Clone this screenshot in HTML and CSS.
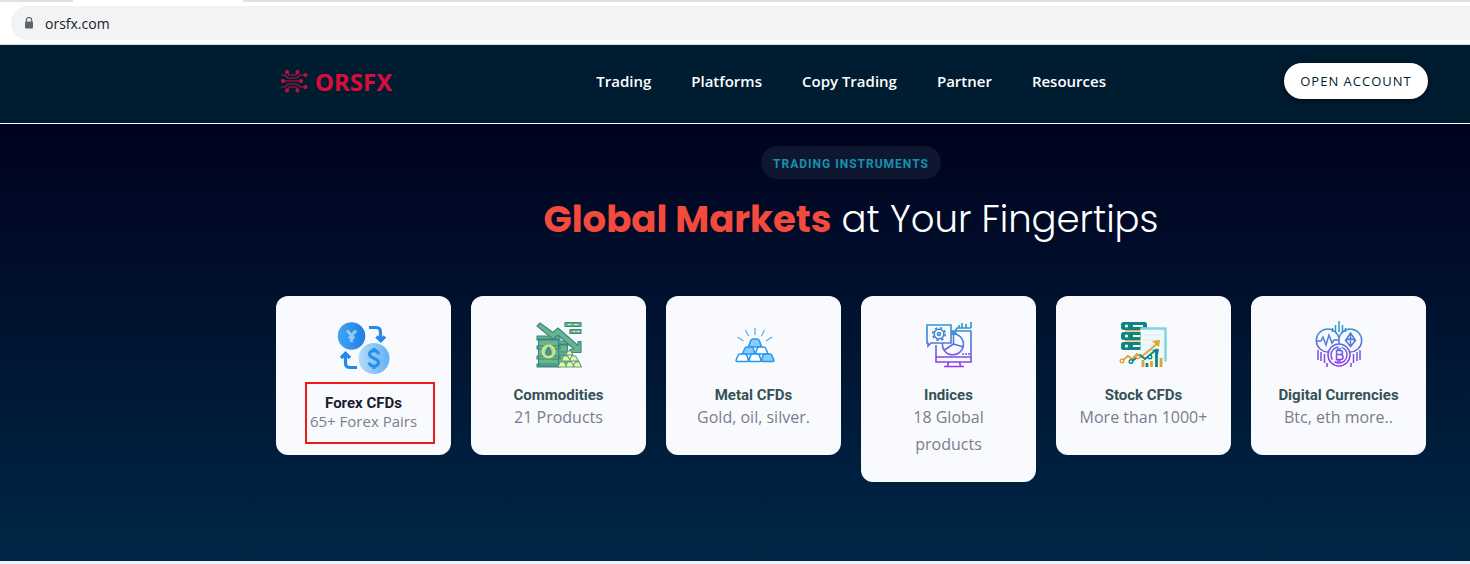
FILE: index.html
```html
<!DOCTYPE html>
<html lang="en">
<head>
  <meta charset="UTF-8" />
  <meta name="viewport" content="width=device-width, initial-scale=1" />
  <title>ORSFX</title>
  <link rel="stylesheet" href="styles.css">
</head>
<body>
  <!-- Browser bar -->
  <div class="tab-strip"><span class="tab-active"></span></div>
  <div class="address-bar">
    <div class="address">
      <svg class="lock" viewBox="0 0 10 12"><path d="M2.3 5V3.2a2.7 2.7 0 0 1 5.4 0V5" fill="none" stroke="#5f6368" stroke-width="1.2"/><rect x="1" y="4.5" width="8" height="7" rx="1" fill="#5f6368"/></svg>
      <input type="text" value="orsfx.com" aria-label="Address" />
    </div>
  </div>

  <!-- Header -->
  <header class="site-header">
    <a href="#" class="logo">
      <svg viewBox="0 0 28 24" fill="none" stroke="#c5103f" stroke-width="1.2">
        <path d="M1 6h4l3 3h9l3-3h4M7 3l2 3h7l2-3M4 12h18M1 18h4l3-3h9l3 3h4M7 21l2-3h7l2 3"/>
        <g fill="#a01a40"><circle cx="7" cy="3" r="1.5"/><circle cx="17.500" cy="3" r="1.5"/><circle cx="25.500" cy="6" r="1.5"/><circle cx="3" cy="12" r="1.5"/><circle cx="21" cy="12" r="1.5"/><circle cx="25.500" cy="18" r="1.5"/><circle cx="7" cy="21.500" r="1.5"/><circle cx="17.500" cy="21.500" r="1.5"/></g>
      </svg>
      <span>ORSFX</span>
    </a>
    <nav class="main-nav">
      <a href="#">Trading</a>
      <a href="#">Platforms</a>
      <a href="#">Copy Trading</a>
      <a href="#">Partner</a>
      <a href="#">Resources</a>
    </nav>
    <button class="open-btn">OPEN ACCOUNT</button>
  </header>

  <!-- Trading instruments -->
  <section class="markets">
    <span class="badge">TRADING INSTRUMENTS</span>
    <h1><strong>Global Markets</strong> at Your Fingertips</h1>

    <div class="cards">
      <div class="card forex">
        <svg class="icon" viewBox="0 0 56 56">
          <defs>
            <linearGradient id="coin-a"><stop stop-color="#42a5f5"/><stop offset="1" stop-color="#1e7fe0"/></linearGradient>
            <linearGradient id="coin-b"><stop stop-color="#b5dbfb"/><stop offset="1" stop-color="#62b2f6"/></linearGradient>
          </defs>
          <circle cx="15.5" cy="16" r="13.8" fill="url(#coin-a)"/>
          <path d="M11 10.5l4.500 5 4.500-5M15.500 15v7M12.500 17.500h6" fill="none" stroke="#90caf9" stroke-width="3"/>
          <circle cx="38" cy="38.5" r="15.5" fill="url(#coin-b)"/>
          <path d="M42.500 34.500c0-5-9-5-9-.5 0 5 9 3.500 9 8.500 0 5-9 5-9 0M38 28v4M38 45v4" fill="none" stroke="#2b8fea" stroke-width="3.2"/>
          <path d="M33 7.500h7q4.500 0 4.500 4.500v7M21 47.500h-7q-4.500 0-4.500-4.500v-7" fill="none" stroke="#2489e8" stroke-width="3.2"/>
          <path d="M40.500 16.500l4.300 4 4.200-4M5 38l4.500-4.500L14 38" fill="none" stroke="#2489e8" stroke-width="3.5"/>
        </svg>
        <h3>Forex CFDs</h3>
        <p>65+ Forex Pairs</p>
        <span class="highlight"></span>
      </div>

      <div class="card">
        <svg class="icon" viewBox="0 0 50 50" stroke="#3b8587" stroke-width="1.1" fill="#69b58c" stroke-linejoin="round">
          <path d="M24.500 24h9v22h-9zM23.500 21h11v4h-11zM24 32h10v3H24z"/>
          <path d="M4.500 19h20v27h-20zM3 16h23v4H3zM3 26h23v3H3zM3 36h23v3H3zM3 44h23v3H3z"/>
          <path d="M3 6l3-3 13 9.500 5-4.500 20 17.500v-4h3v11H36v-3l4-.5-16-14-5 4z"/>
          <circle cx="14.500" cy="31.500" r="6" fill="#a9d8a0" stroke="#d8e879" stroke-width="1.8"/>
          <path d="M14.500 27c-4 5-3 8 0 8s4-3 0-8z" fill="#4a9a7f"/>
          <g fill="#f0f4a8" stroke="#5ba47f"><path d="M24 47l2-5h4l3 5zM31.500 47l2-5h4l3 5zM39 47l2-5h4l2.500 5zM27.500 41l2-5h4l3 5zM35.500 41l2-5h4l3 5zM32 35l1.500-4h3.500l2 4z"/></g>
          <path d="M31 2.500h16v4H31zM36 9.500h11v4H36z"/>
          <path d="M34 4.500h3m3 0h4M39 11.500h2m2 0h3" stroke="#dced83"/>
        </svg>
        <h3>Commodities</h3>
        <p>21 Products</p>
      </div>

      <div class="card">
        <svg class="icon" viewBox="0 0 50 50" stroke="#2196f3" stroke-width="1.5" fill="#fff" stroke-linejoin="round">
          <path d="M19.500 27l2-6q.5-2 2.500-2h4q2 0 2.500 2l2 6z" fill="#90caf9"/>
          <path d="M13.500 34l2-5q.5-2 2.500-2h4q2 0 2.500 2l1.500 5z" fill="#90caf9"/>
          <path d="M26.500 34l1.500-5q.5-2 2.500-2h4q2 0 2.500 2l2 5z"/>
          <path d="M7 40.500l2-5q.5-1.500 2.500-1.500h4q2 0 2.500 1.500l1.500 5q0 1-1 1H8q-1 0-1-1zM20 40.500l1.500-5q.5-1.500 2.500-1.500h4q2 0 2.500 1.500l1.500 5q0 1-1 1H21q-1 0-1-1z"/>
          <path d="M32.500 40.500l1.500-5q.5-1.500 2.500-1.500h4q2 0 2.500 1.500l2 5q0 1-1 1H33.500q-1 0-1-1z" fill="#90caf9"/>
          <path d="M26 8v7M16.500 10l3 6M35.500 10l-3 6M8.500 17l6 4M43 17l-6 4" stroke="#5ab0f5" stroke-width="1.3"/>
        </svg>
        <h3>Metal CFDs</h3>
        <p>Gold, oil, silver.</p>
      </div>

      <div class="card">
        <svg class="icon" viewBox="0 0 50 50" fill="none" stroke="url(#blue-violet)" stroke-width="1.6">
          <defs>
            <linearGradient id="blue-violet" gradientUnits="userSpaceOnUse" x1="0" y1="2" x2="0" y2="48"><stop stop-color="#249fcb"/><stop offset=".5" stop-color="#5872df"/><stop offset="1" stop-color="#9b32ee"/></linearGradient>
          </defs>
          <path d="M27 11h20v31H12V25M12 37h35M24.500 42l-1 4m12-4l1 4M20 46.500h20"/>
          <path d="M3 5h24v18H7l-3 3v-3H3z"/>
          <circle cx="15" cy="14" r="4.8"/><circle cx="15" cy="14" r="1.5"/>
          <circle cx="15" cy="14" r="6.3" stroke-dasharray="2.5 2.45"/>
          <path d="M27 14a10.500 10.500 0 1 1-8.500 9M27 12c2 0 4 .5 6 2M29.500 14v10l-9 6M29.500 24l10 3"/>
          <path d="M29 15l4-7h14M35 8V5m3 3V3m4 5V4m5 4V2M38 34h2m1 0h2m1 0h2"/>
        </svg>
        <h3>Indices</h3>
        <p>18 Global products</p>
      </div>

      <div class="card">
        <svg class="icon" viewBox="0 0 50 50" fill="none">
          <g fill="#0c8583"><rect x="2" y="2" width="26" height="8" rx="2.5"/><rect x="2" y="12" width="26" height="8" rx="2.5"/><rect x="2" y="22" width="26" height="8" rx="2.5"/></g>
          <path d="M6 10.800h20M6 20.800h20" stroke="#e5b156" stroke-width="1.5"/>
          <g fill="#fff"><circle cx="7.500" cy="6" r="1.6"/><circle cx="7.500" cy="16" r="1.6"/><circle cx="7.500" cy="26" r="1.6"/><path d="M14 5h10v2H14zM14 15h7v2h-7zM14 25h7v2h-7z"/></g>
          <path d="M21.500 8.500h25v35h-25z" fill="#eff9fa"/><path d="M21.500 8.500h25v33" stroke="#83d4df" stroke-width="2.5"/>
          <path d="M24 15h18M24 20h16M24 25h17M24 30h12" stroke="#d8edf0"/>
          <path d="M3 41l6-5 4 3 5-5 4 3 10-8 8-7" stroke="#e2a234" stroke-width="1.8"/><path d="M33 21l8-1-1 7z" fill="#e2a234"/>
          <path d="M12 42l9-7 5 4 6-5 6-5" stroke="#0c8583" stroke-width="1.8"/><path d="M33 30l7-1-1 6z" fill="#0c8583"/>
          <g fill="#fff" stroke-width="1.4"><circle cx="3" cy="41" r="1.8" stroke="#e2a234"/><circle cx="19" cy="37" r="1.7" stroke="#e2a234"/><circle cx="12" cy="41.500" r="1.8" stroke="#0c8583"/><circle cx="31" cy="37" r="1.8" stroke="#0c8583"/></g>
          <path d="M24 40v7M32.500 41v6M42 38v9" stroke="#e2a234" stroke-width="2.8"/><path d="M28 43v4M37.500 30v17" stroke="#0c8583" stroke-width="2.8"/>
        </svg>
        <h3>Stock CFDs</h3>
        <p>More than 1000+</p>
      </div>

      <div class="card">
        <svg class="icon" viewBox="0 0 50 50" fill="none" stroke="url(#blue-violet)" stroke-width="1.5">
          <path d="M25 1v11M21.500 5v7M28.500 5v7M18.500 8v4M31.500 8v4"/>
          <path d="M25 18a11.500 11.500 0 1 0-11 14M25 18a11.500 11.500 0 1 1 11 14M25 17v7"/>
          <path d="M3 21h4l2-4 3 8 3-10 3 8 2-3h5"/>
          <path d="M36.500 13l5 7.500-5 6-5-6zM31.500 20.500l5-2 5 2M36.500 13v13.500"/>
          <circle cx="25" cy="35" r="11"/><circle cx="25" cy="35" r="8" stroke-dasharray="17 3"/>
          <path d="M22.500 30.500h3.500q2.500 0 2.500 2t-2.500 2h-3.500zM22.500 34.500h4q2.500 0 2.500 2.500t-2.500 2.500h-4zM24 28v2.500m2-2.500v2.500M24 39.500V42m2-2.500V42"/>
          <path d="M4 30v10M7 32v9M10.500 34v9M13 43v4M46 30v10M43 32v9M39.500 34v9M37 43v4"/>
        </svg>
        <h3>Digital Currencies</h3>
        <p>Btc, eth more..</p>
      </div>
    </div>
  </section>
</body>
</html>
```
FILE: styles.css
```css
* {
  box-sizing: border-box;
  margin: 0;
  padding: 0;
}

body {
  background: #eaf3f4;
  font-family: "Open Sans", sans-serif;
}

.tab-strip {
  height: 2px;
  background: #dee1e6;
}

.tab-active {
  display: block;
  width: 170px;
  height: 2px;
  margin-left: 73px;
  background: #fff;
}

.address-bar {
  padding: 4px 0 4px 11px;
  background: #fff;
  border-bottom: 1px solid #dadce0;
}

.address {
  display: flex;
  align-items: center;
  gap: 11px;
  height: 34px;
  padding-left: 13px;
  background: #f1f3f4;
  border-radius: 17px 0 0 17px;
}

.lock {
  width: 10px;
  height: 12px;
}

.address input {
  flex: 1;
  border: none;
  outline: none;
  background: none;
  color: #202124;
  font-family: "Open Sans", sans-serif;
  font-size: 14px;
}

.site-header {
  display: flex;
  align-items: center;
  justify-content: space-between;
  height: 79px;
  padding: 0 42px 6px 280px;
  background: #001c30;
  border-bottom: 1px solid #fff;
}

.logo {
  display: flex;
  align-items: center;
  gap: 7px;
  margin-right: 26px;
  color: #d90d3c;
  font-family: "Noto Sans", sans-serif;
  font-size: 24px;
  font-weight: 700;
  text-decoration: none;
}

.logo svg {
  width: 28px;
  height: 24px;
}

.main-nav {
  display: flex;
  gap: 40px;
}

.main-nav a {
  color: #fff;
  font-size: 15px;
  font-weight: 600;
  text-decoration: none;
}

.open-btn {
  width: 144px;
  height: 36px;
  border: none;
  border-radius: 18px;
  background: #fff;
  color: #001c30;
  box-shadow: 0 2px 6px rgba(0, 0, 0, 0.5);
  font-family: "Open Sans", sans-serif;
  font-size: 13px;
  letter-spacing: 1px;
  cursor: pointer;
}

.markets {
  display: flex;
  flex-direction: column;
  align-items: center;
  padding: 22px 44px 79px 276px;
  background: linear-gradient(#00021e, #002747);
}

.badge {
  padding: 3px 12px 0;
  border-radius: 17px;
  background: #0e172f;
  color: #1592b0;
  font-family: Roboto, sans-serif;
  font-size: 12px;
  font-weight: 700;
  letter-spacing: 1px;
  line-height: 30px;
}

h1 {
  margin: 12px 0 49px;
  color: #fff;
  font-family: Poppins, Inter, sans-serif;
  font-size: 37px;
  font-weight: 300;
  line-height: 56px;
}

h1 strong {
  color: #f44a3e;
  font-weight: 700;
}

.cards {
  display: grid;
  grid-template-columns: repeat(6, 1fr);
  gap: 20px;
  align-items: start;
  width: 100%;
}

.card {
  position: relative;
  min-height: 159px;
  padding: 24px 20px;
  border-radius: 12px;
  background: #f9fafd;
  text-align: center;
}

.icon {
  display: block;
  width: 50px;
  height: 50px;
  margin: 0 auto 16px;
}

.card h3 {
  color: #345156;
  font-family: Roboto, sans-serif;
  font-size: 15px;
  font-weight: 700;
  line-height: 18px;
  white-space: nowrap;
}

.card p {
  color: #7a7d8d;
  font-size: 16px;
  line-height: 27px;
}

.forex .icon {
  width: 56px;
  height: 56px;
  margin-bottom: 18px;
}

.forex h3 {
  color: #1a1b30;
}

.forex p {
  font-size: 15px;
  line-height: 18px;
}

/* red frame over the forex text */
.highlight {
  position: absolute;
  top: 86px;
  left: 29px;
  width: 130px;
  height: 62px;
  border: 2px solid #f01919;
}
```
